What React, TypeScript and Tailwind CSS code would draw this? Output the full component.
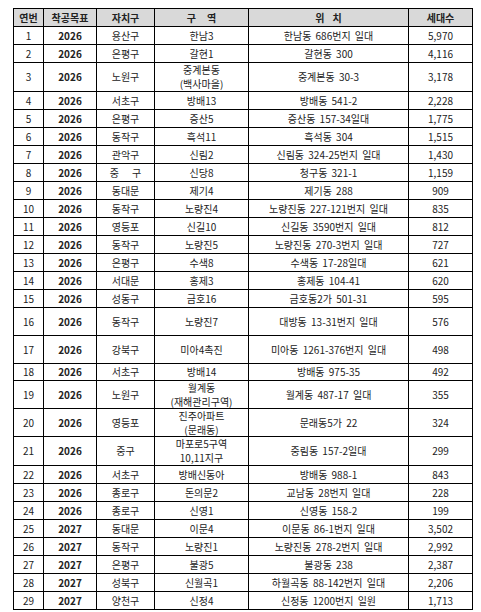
import React from "react";

type Row = {
  n: string;
  y: string;
  gu: React.ReactNode;
  area: string[];
  loc: string;
  cnt: string;
  h: string;
  lead?: string;
};

const rows: Row[] = [
  { n: "1", y: "2026", gu: "용산구", area: ["한남3"], loc: "한남동 686번지 일대", cnt: "5,970", h: "h-[17px]" },
  { n: "2", y: "2026", gu: "은평구", area: ["갈현1"], loc: "갈현동 300", cnt: "4,116", h: "h-[17px]" },
  { n: "3", y: "2026", gu: "노원구", area: ["중계본동", "(백사마을)"], loc: "중계본동 30-3", cnt: "3,178", h: "h-[28px]", lead: "leading-[14px]" },
  { n: "4", y: "2026", gu: "서초구", area: ["방배13"], loc: "방배동 541-2", cnt: "2,228", h: "h-[17px]" },
  { n: "5", y: "2026", gu: "은평구", area: ["증산5"], loc: "증산동 157-34일대", cnt: "1,775", h: "h-[17px]" },
  { n: "6", y: "2026", gu: "동작구", area: ["흑석11"], loc: "흑석동 304", cnt: "1,515", h: "h-[17px]" },
  { n: "7", y: "2026", gu: "관악구", area: ["신림2"], loc: "신림동 324-25번지 일대", cnt: "1,430", h: "h-[17px]" },
  {
    n: "8",
    y: "2026",
    gu: (
      <span className="flex gap-[13px]">
        <span>중</span>
        <span>구</span>
      </span>
    ),
    area: ["신당8"],
    loc: "청구동 321-1",
    cnt: "1,159",
    h: "h-[17px]",
  },
  { n: "9", y: "2026", gu: "동대문", area: ["제기4"], loc: "제기동 288", cnt: "909", h: "h-[17px]" },
  { n: "10", y: "2026", gu: "동작구", area: ["노량진4"], loc: "노량진동 227-121번지 일대", cnt: "835", h: "h-[17px]" },
  { n: "11", y: "2026", gu: "영등포", area: ["신길10"], loc: "신길동 3590번지 일대", cnt: "812", h: "h-[17px]" },
  { n: "12", y: "2026", gu: "동작구", area: ["노량진5"], loc: "노량진동 270-3번지 일대", cnt: "727", h: "h-[17px]" },
  { n: "13", y: "2026", gu: "은평구", area: ["수색8"], loc: "수색동 17-28일대", cnt: "621", h: "h-[17px]" },
  { n: "14", y: "2026", gu: "서대문", area: ["홍제3"], loc: "홍제동 104-41", cnt: "620", h: "h-[17px]" },
  { n: "15", y: "2026", gu: "성동구", area: ["금호16"], loc: "금호동2가 501-31", cnt: "595", h: "h-[17px]" },
  { n: "16", y: "2026", gu: "동작구", area: ["노량진7"], loc: "대방동 13-31번지 일대", cnt: "576", h: "h-[27px]" },
  { n: "17", y: "2026", gu: "강북구", area: ["미아4촉진"], loc: "미아동 1261-376번지 일대", cnt: "498", h: "h-[27px]" },
  { n: "18", y: "2026", gu: "서초구", area: ["방배14"], loc: "방배동 975-35", cnt: "492", h: "h-[16px]" },
  { n: "19", y: "2026", gu: "노원구", area: ["월계동", "(재해관리구역)"], loc: "월계동 487-17 일대", cnt: "355", h: "h-[27px]", lead: "leading-[14px]" },
  { n: "20", y: "2026", gu: "영등포", area: ["진주아파트", "(문래동)"], loc: "문래동5가 22", cnt: "324", h: "h-[27px]", lead: "leading-[14px]" },
  { n: "21", y: "2026", gu: "중구", area: ["마포로5구역", "10,11지구"], loc: "중림동 157-2일대", cnt: "299", h: "h-[28px]", lead: "leading-[14px]" },
  { n: "22", y: "2026", gu: "서초구", area: ["방배신동아"], loc: "방배동 988-1", cnt: "843", h: "h-[17px]" },
  { n: "23", y: "2026", gu: "종로구", area: ["돈의문2"], loc: "교남동 28번지 일대", cnt: "228", h: "h-[17px]" },
  { n: "24", y: "2026", gu: "종로구", area: ["신영1"], loc: "신영동 158-2", cnt: "199", h: "h-[17px]" },
  { n: "25", y: "2027", gu: "동대문", area: ["이문4"], loc: "이문동 86-1번지 일대", cnt: "3,502", h: "h-[17px]" },
  { n: "26", y: "2027", gu: "동작구", area: ["노량진1"], loc: "노량진동 278-2번지 일대", cnt: "2,992", h: "h-[17px]" },
  { n: "27", y: "2027", gu: "은평구", area: ["불광5"], loc: "불광동 238", cnt: "2,387", h: "h-[17px]" },
  { n: "28", y: "2027", gu: "성북구", area: ["신월곡1"], loc: "하월곡동 88-142번지 일대", cnt: "2,206", h: "h-[17px]" },
  { n: "29", y: "2027", gu: "양천구", area: ["신정4"], loc: "신정동 1200번지 일원", cnt: "1,713", h: "h-[17px]" },
];

const cell = "bg-white flex flex-col items-center justify-center text-center whitespace-pre";
const head = "bg-[#d9d9d9] flex items-center justify-center font-bold h-[17px]";

export default function App() {
  return (
    <div
      className="w-[481px] h-[612px] bg-white pt-[8px] pl-[13px] text-[10px] text-[#222] [word-spacing:2px]"
      style={{ fontFamily: '"Noto Sans CJK KR", "Noto Sans", sans-serif' }}
    >
      <div className="grid w-max grid-cols-[29px_52px_57px_93px_159px_63px] gap-px bg-black p-px leading-none">
        <div className={head}>연번</div>
        <div className={head}>착공목표</div>
        <div className={head}>자치구</div>
        <div className={`${head} gap-[11px]`}>
          <span>구</span>
          <span>역</span>
        </div>
        <div className={`${head} gap-[8px]`}>
          <span>위</span>
          <span>치</span>
        </div>
        <div className={head}>세대수</div>
        {rows.map((r) => (
          <React.Fragment key={r.n}>
            <div className={`${cell} ${r.h}`}>{r.n}</div>
            <div className={`${cell} ${r.h} font-bold`}>{r.y}</div>
            <div className={`${cell} ${r.h}`}>{r.gu}</div>
            <div className={`${cell} ${r.h} ${r.lead ?? ""}`}>
              {r.area.map((a) => (
                <span key={a}>{a}</span>
              ))}
            </div>
            <div className={`${cell} ${r.h}`}>{r.loc}</div>
            <div className={`${cell} ${r.h}`}>{r.cnt}</div>
          </React.Fragment>
        ))}
      </div>
    </div>
  );
}
